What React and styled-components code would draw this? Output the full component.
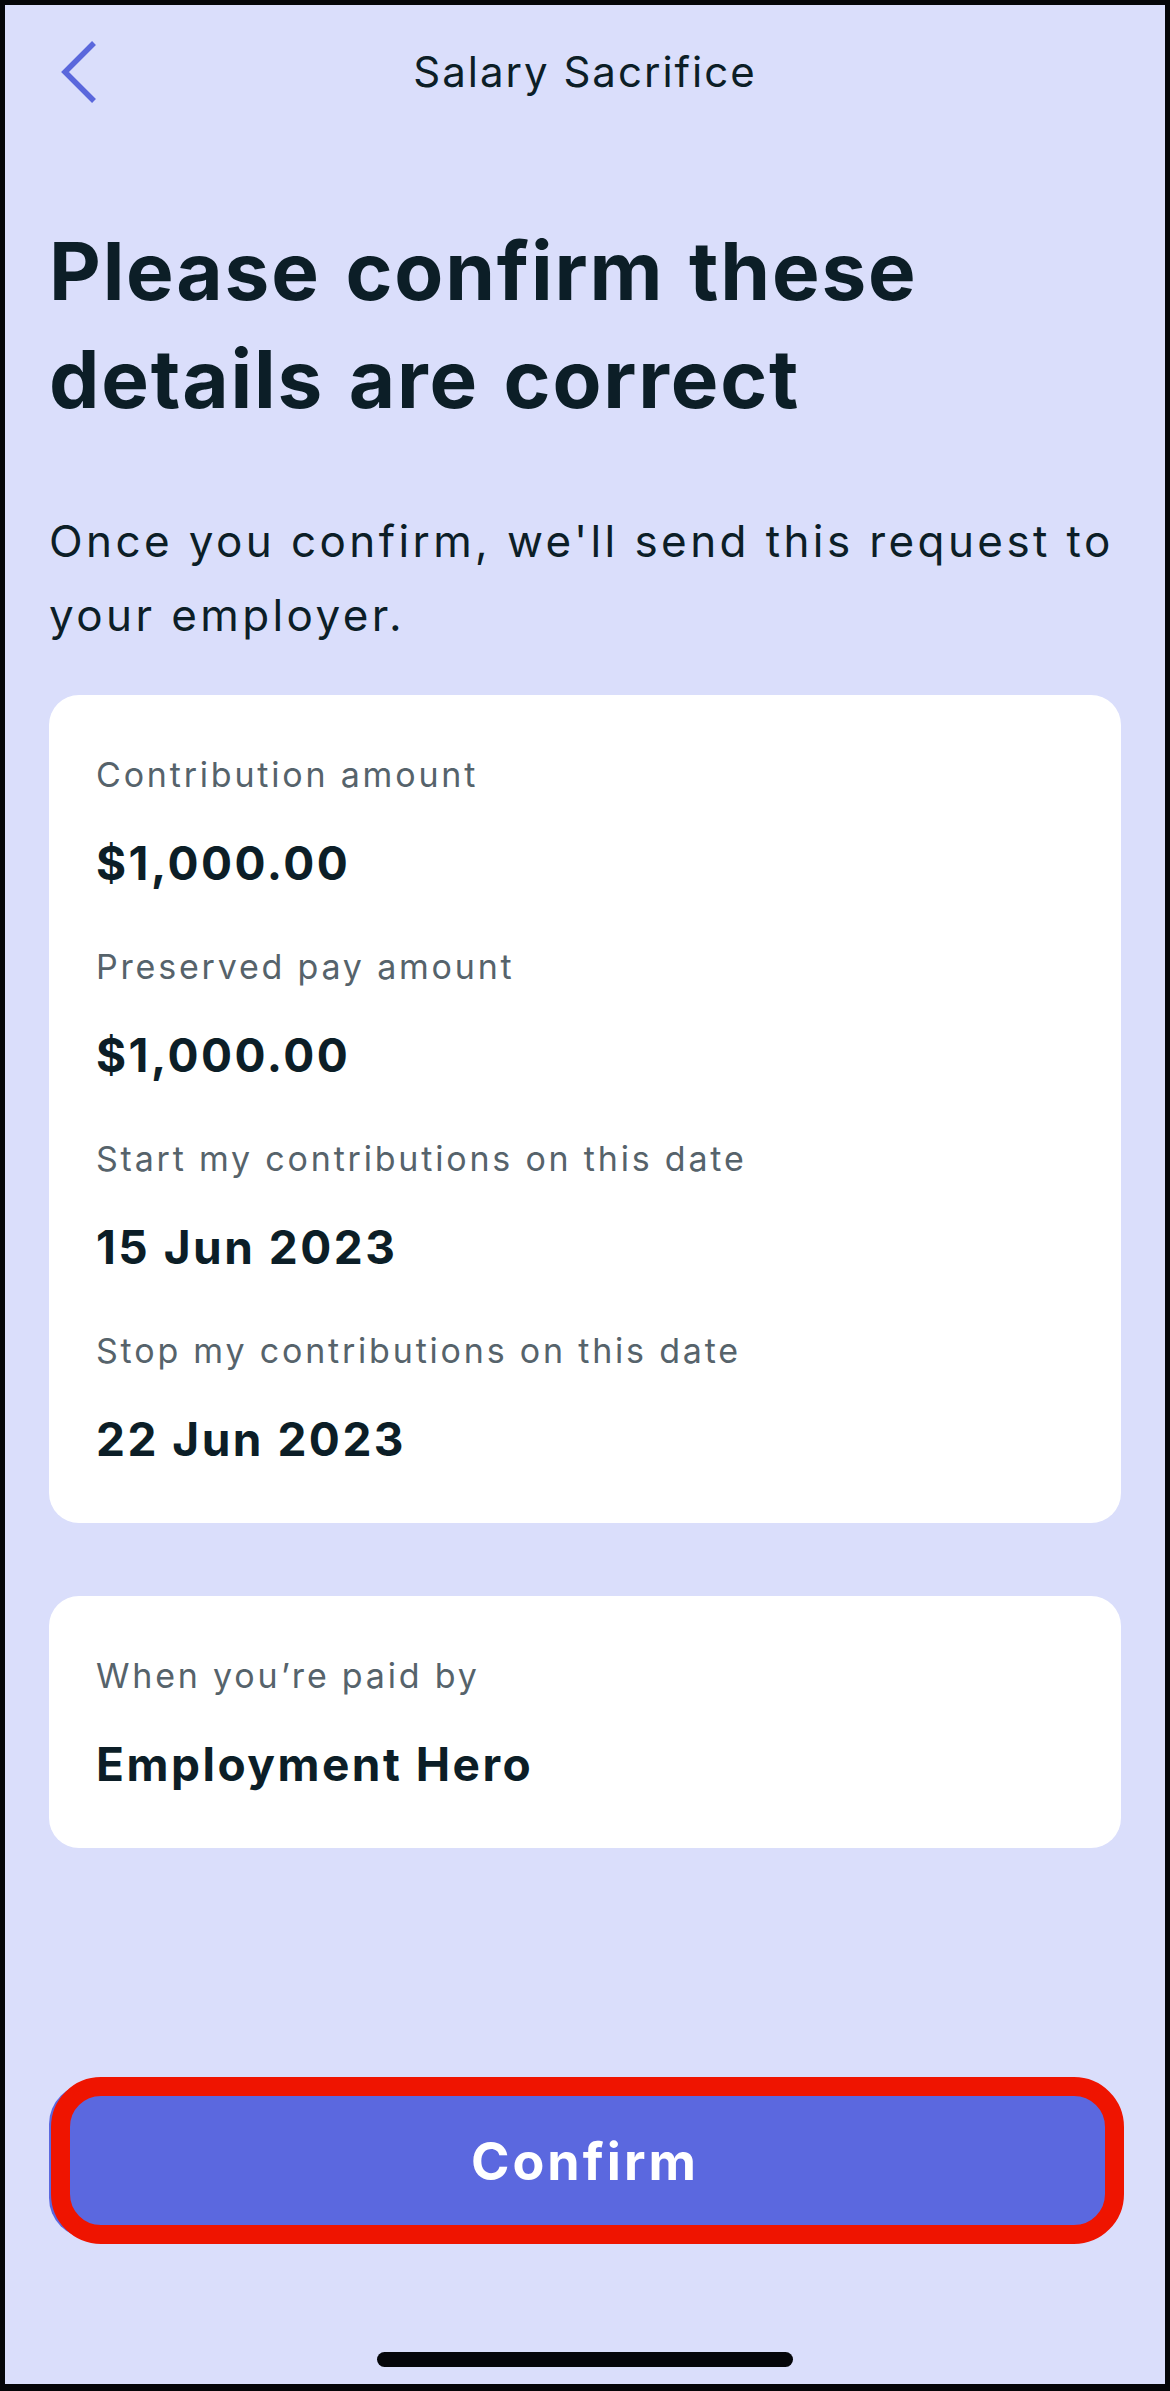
import React from 'react';
import styled, { createGlobalStyle } from 'styled-components';

const GlobalStyle = createGlobalStyle`
  html, body {
    margin: 0;
    padding: 0;
    background: #000;
  }
  * {
    box-sizing: border-box;
  }
`;

const Screen = styled.div`
  height: 100vh;
  border: 5px solid #050608;
  border-bottom-width: 7px;
  background: #dadefb;
  display: flex;
  flex-direction: column;
  padding: 0 44px;
  font-family: Inter, 'Liberation Sans', sans-serif;
  color: #0c1e27;
`;

const TopBar = styled.header`
  height: 134px;
  display: grid;
  grid-template-columns: 1fr auto 1fr;
  align-items: center;
`;

const BackButton = styled.button`
  justify-self: start;
  background: none;
  border: none;
  padding: 0;
  margin-left: 10px;
  display: flex;
  cursor: pointer;
`;

const TopTitle = styled.h1`
  margin: 0;
  font-size: 42px;
  font-weight: 400;
  letter-spacing: 2px;
  line-height: 1;
`;

const Heading = styled.h2`
  margin: 78px 0 0;
  font-size: 80px;
  font-weight: 700;
  line-height: 108px;
  letter-spacing: 1.8px;
  word-spacing: 4px;
`;

const Intro = styled.p`
  margin: 71px 0 0;
  font-size: 44px;
  line-height: 74px;
  letter-spacing: 3.4px;
`;

const Card = styled.section`
  background: #fff;
  border-radius: 30px;
  padding: 58px 47px 56px;
  margin-top: ${p => p.$gap}px;
  display: flex;
  flex-direction: column;
  gap: 54px;
`;

const Field = styled.div`
  display: flex;
  flex-direction: column;
  gap: 38px;
`;

const Label = styled.div`
  font-size: 34px;
  line-height: 44px;
  color: #56636b;
  letter-spacing: 2.8px;
`;

const Value = styled.div`
  font-size: 46px;
  line-height: 56px;
  font-weight: 700;
  letter-spacing: 2.5px;
`;

const Footer = styled.div`
  margin-top: auto;
  display: flex;
  flex-direction: column;
  align-items: center;
  padding-bottom: 17px;
`;

const ConfirmButton = styled.button`
  position: relative;
  width: 100%;
  height: 154px;
  border: none;
  border-radius: 40px;
  background: #5b68df;
  color: #fff;
  font-family: inherit;
  font-size: 52px;
  font-weight: 700;
  letter-spacing: 3px;
  cursor: pointer;

  /* red highlight ring drawn over the button */
  &::after {
    content: '';
    position: absolute;
    top: -7px;
    bottom: -6px;
    left: 2px;
    right: -3px;
    border: 19px solid #ef1400;
    border-radius: 50px;
  }
`;

const HomeBar = styled.div`
  margin-top: 114px;
  width: 416px;
  height: 15px;
  border-radius: 8px;
  background: #05060a;
`;

const fields = [
  { label: 'Contribution amount', value: '$1,000.00' },
  { label: 'Preserved pay amount', value: '$1,000.00' },
  { label: 'Start my contributions on this date', value: '15 Jun 2023' },
  { label: 'Stop my contributions on this date', value: '22 Jun 2023' },
];

function App() {
  return (
    <>
      <GlobalStyle />
      <Screen>
        <TopBar>
          <BackButton aria-label="Back">
            <svg width="40" height="64" viewBox="0 0 40 64">
              <polyline
                points="35,3 6,32 35,61"
                fill="none"
                stroke="#5a67dc"
                strokeWidth="5.5"
              />
            </svg>
          </BackButton>
          <TopTitle>Salary Sacrifice</TopTitle>
          <div />
        </TopBar>

        <Heading>Please confirm these details are correct</Heading>
        <Intro>Once you confirm, we'll send this request to your employer.</Intro>

        <Card $gap={43}>
          {fields.map(f => (
            <Field key={f.label}>
              <Label>{f.label}</Label>
              <Value>{f.value}</Value>
            </Field>
          ))}
        </Card>

        <Card $gap={73}>
          <Field>
            <Label>When you’re paid by</Label>
            <Value>Employment Hero</Value>
          </Field>
        </Card>

        <Footer>
          <ConfirmButton>Confirm</ConfirmButton>
          <HomeBar />
        </Footer>
      </Screen>
    </>
  );
}

export default App;
